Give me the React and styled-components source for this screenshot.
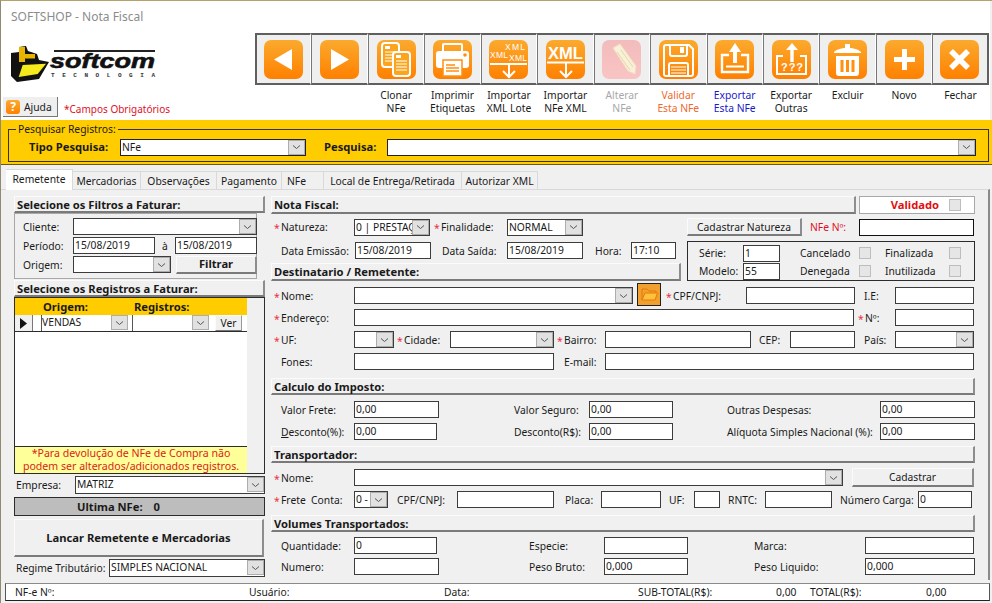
import styled, { createGlobalStyle } from "styled-components";

const GlobalStyle = createGlobalStyle`
  html, body {
    margin: 0;
    padding: 0;
    background: #f0f0f0;
  }
  * {
    box-sizing: border-box;
  }
`;

const Window = styled.div`
  width: 992px;
  height: 603px;
  overflow: hidden;
  display: flex;
  flex-direction: column;
  background: #f0f0f0;
  border-top: 1px solid #b3a36a;
  border-left: 1px solid #8f8a70;
  font-family: "Noto Sans", "Open Sans", sans-serif;
  font-size: 10.3px;
  line-height: 14px;
  color: #1a1a1a;
`;

/* header */
const Header = styled.header`
  height: 119px;
  flex-shrink: 0;
  background: #fff;
  margin-right: 2px;
  display: flex;
  flex-direction: column;
`;
const Title = styled.div`
  height: 32px;
  padding: 9px 0 0 10px;
  font-size: 12px;
  color: #8c8c8c;
`;
const HeaderBody = styled.div`
  display: flex;
  flex: 1;
`;
const Brand = styled.div`
  width: 254px;
  display: flex;
  flex-direction: column;
`;
const LogoWrap = styled.div`
  height: 64px;
  padding: 12px 0 0 9px;
`;
const BrandFoot = styled.div`
  display: flex;
  align-items: center;
  padding-left: 2px;
  gap: 6px;
`;
const HelpButton = styled.div`
  width: 55px;
  height: 20px;
  display: flex;
  align-items: center;
  gap: 4px;
  padding-left: 3px;
  background: #efefef;
  border-right: 1px solid #777;
  border-bottom: 1px solid #777;
`;
const HelpTile = styled.span`
  width: 14px;
  height: 14px;
  border-radius: 3px;
  background: linear-gradient(#fbaa2e, #ff8200);
  color: #fff;
  font-weight: 700;
  font-size: 12px;
  line-height: 14px;
  text-align: center;
`;
const Required = styled.span`
  color: #e0102a;
  font-size: 10px;
  margin-top: 3px;
`;
const Tools = styled.div`
  display: grid;
  grid-template-columns: repeat(13, 56.45px);
  grid-template-rows: 52px auto;
`;
const ToolCell = styled.div`
  height: 52px;
  display: flex;
  align-items: center;
  justify-content: center;
  background: #efefef;
  border-top: 2px solid #5f5f5f;
  border-bottom: 2px solid #5f5f5f;
  border-left: 1px solid #777;
  border-right: 1px solid #fff;
  &:first-child {
    border-left: 2px solid #5f5f5f;
  }
  &:nth-child(13) {
    border-right: 2px solid #5f5f5f;
  }
`;
const Tile = styled.div`
  width: 39px;
  height: 39px;
  border-radius: 7px;
  background: ${(p) =>
    p.$off
      ? "linear-gradient(#f3bcbc, #f9c4c4)"
      : "linear-gradient(#fbaa2e, #ff8000)"};
  svg {
    display: block;
  }
`;
const ToolLabel = styled.div`
  padding-top: 4px;
  text-align: center;
  line-height: 13px;
  color: ${(p) => p.$color || "#1a1a1a"};
`;

/* search strip */
const SearchStrip = styled.div`
  height: 45px;
  flex-shrink: 0;
  background: #ffcc00;
  padding: 9px 3px 0 7px;
  border-bottom: 1px solid #6a5a1a;
`;
const SearchGroup = styled.fieldset`
  margin: 0;
  padding: 0 11px 0 20px;
  height: 33px;
  border: 1px solid #333;
  display: flex;
  align-items: center;
  position: relative;
`;
const SearchLegend = styled.legend`
  position: absolute;
  top: -8px;
  left: 7px;
  padding: 0 2px;
  background: #ffcc00;
`;
const SearchRow = styled.div`
  display: flex;
  align-items: center;
  margin-top: 3px;
`;
const BoldLabel = styled.span`
  width: ${(p) => p.$w}px;
  margin-left: ${(p) => p.$ml || 0}px;
  font-size: 11.2px;
  font-weight: 700;
  white-space: nowrap;
`;

/* tabs */
const TabStrip = styled.div`
  display: flex;
  flex-shrink: 0;
  height: 24px;
  padding: 4px 0 0 5px;
`;
const Tab = styled.div`
  width: ${(p) => p.$w}px;
  height: ${(p) => (p.$active ? 21 : 18)}px;
  margin-top: ${(p) => (p.$active ? 0 : 2)}px;
  padding-top: 2px;
  padding-right: ${(p) => p.$pr || 0}px;
  text-align: center;
  white-space: nowrap;
  position: relative;
  z-index: ${(p) => (p.$active ? 1 : 0)};
  background: ${(p) => (p.$active ? "#fff" : "#f0f0f0")};
  border: 1px solid #d9d9d9;
  border-bottom: 0;
  border-left: 0;
`;
const Panel = styled.div`
  flex: 1;
  min-height: 0;
  display: flex;
  gap: 6px;
  margin-right: 2px;
  padding: 6px 0 0 13px;
  border-top: 1px solid #d9d9d9;
  border-right: 2px solid #8a8a8a;
`;
const LeftCol = styled.div`
  width: 251px;
  display: flex;
  flex-direction: column;
`;
const RightCol = styled.div`
  width: 704px;
  display: flex;
  flex-direction: column;
`;

/* shared parts */
const SectionBar = styled.div`
  width: ${(p) => (p.$w ? `${p.$w}px` : "100%")};
  height: ${(p) => p.$h || 18}px;
  margin-top: ${(p) => p.$mt || 0}px;
  flex-shrink: 0;
  padding: 1px 0 0 2px;
  background: #f0f0f0;
  font-size: 11.2px;
  font-weight: 700;
  border-top: 1px solid #fbfbfb;
  border-left: 1px solid #fbfbfb;
  border-right: 2px solid #8d8d8d;
  border-bottom: 2px solid #7a7a7a;
  white-space: nowrap;
`;
const Row = styled.div`
  display: flex;
  align-items: center;
  height: ${(p) => p.$h || 17}px;
  margin-top: ${(p) => p.$mt || 0}px;
  padding-left: ${(p) => p.$pl ?? 3}px;
  flex-shrink: 0;
`;
const Label = styled.span`
  width: ${(p) => p.$w}px;
  margin-left: ${(p) => p.$ml || 0}px;
  padding-left: ${(p) => (p.$plain ? 0 : 7)}px;
  flex-shrink: 0;
  white-space: pre;
  position: relative;
  color: ${(p) => p.$color || "inherit"};
`;
const Star = styled.span`
  position: absolute;
  left: 0;
  top: 1px;
  color: #e8304a;
`;
const Field = styled.div`
  width: ${(p) => p.$w}px;
  height: ${(p) => p.$h || 17}px;
  margin-left: ${(p) => p.$ml || 0}px;
  flex-shrink: 0;
  padding-left: 1px;
  background: #fff;
  border: 1px solid ${(p) => p.$border || "#3c3c3c"};
  white-space: nowrap;
  overflow: hidden;
  line-height: 14px;
`;
const ComboBox = styled(Field)`
  display: flex;
`;
const ComboText = styled.span`
  flex: 1;
  overflow: hidden;
`;
const ComboArrow = styled.span`
  width: 17px;
  height: 15px;
  flex-shrink: 0;
  background: #e1e1e1;
  border: 1px solid #adadad;
  display: flex;
  align-items: center;
  justify-content: center;
`;
const Button = styled.div`
  width: ${(p) => p.$w}px;
  height: ${(p) => p.$h || 18}px;
  margin-left: ${(p) => p.$ml || 0}px;
  margin-top: ${(p) => p.$mt || 0}px;
  flex-shrink: 0;
  display: flex;
  align-items: center;
  justify-content: center;
  font-size: ${(p) => (p.$bold ? "11.2px" : "inherit")};
  font-weight: ${(p) => (p.$bold ? 700 : 400)};
  background: #f0f0f0;
  border-top: 1px solid #fbfbfb;
  border-left: 1px solid #fbfbfb;
  border-right: 2px solid #8d8d8d;
  border-bottom: 2px solid #7a7a7a;
`;
const CheckBox = styled.span`
  width: 12px;
  height: 12px;
  flex-shrink: 0;
  background: #e6e6e6;
  border: 1px solid #bdbdbd;
`;

/* left column */
const FilterBox = styled.div`
  height: 66px;
  flex-shrink: 0;
  margin-right: 8px;
  padding: 4px 0 0 8px;
  border: 1px solid #a8a8a8;
  display: flex;
  flex-direction: column;
  gap: 2px;
`;
const Grid = styled.div`
  height: 177px;
  flex-shrink: 0;
  display: flex;
  flex-direction: column;
  background: #f0f0f0;
  border: 1px solid #2c2c2c;
`;
const GridHead = styled.div`
  width: 232px;
  height: 17px;
  background: #ffcc00;
  display: flex;
  align-items: center;
  padding-left: 28px;
`;
const GridRow = styled.div`
  width: 232px;
  height: 17px;
  display: flex;
  background: #fff;
  border-bottom: 1px solid #2c2c2c;
`;
const RowMark = styled.div`
  width: 18px;
  background: #f0f0f0;
  border-right: 1px solid #777;
  display: flex;
  align-items: center;
  justify-content: center;
`;
const GridCell = styled.div`
  width: ${(p) => p.$w}px;
  display: flex;
  padding-left: ${(p) => p.$pl || 0}px;
  margin-left: ${(p) => p.$ml || 0}px;
  border-left: 1px solid #555;
  overflow: hidden;
`;
const SmallButton = styled(Button)`
  border-right: 1px solid #999;
  border-bottom: 1px solid #777;
`;
const GridBody = styled.div`
  width: 232px;
  flex: 1;
  background: #fff;
`;
const GridNote = styled.div`
  width: 232px;
  height: 27px;
  background: #ffff99;
  border-top: 1px solid #2c2c2c;
  color: #d8241a;
  font-size: 10.6px;
  text-align: center;
  line-height: 13px;
`;
const LastInvoice = styled.div`
  height: 19px;
  margin-top: 3px;
  flex-shrink: 0;
  display: flex;
  align-items: center;
  gap: 11px;
  padding-left: 62px;
  font-size: 11.2px;
  font-weight: 700;
  background: #bdbdbd;
  border: 1px solid #2c2c2c;
`;

/* right column */
const ValidBox = styled.div`
  width: 116px;
  height: 18px;
  margin-left: 3px;
  display: flex;
  align-items: center;
  justify-content: flex-end;
  padding-right: 13px;
  gap: 10px;
  background: #fff;
  border: 1px solid #a8a8a8;
  color: #e01010;
  font-size: 11.2px;
  font-weight: 700;
`;
const Split = styled.div`
  display: flex;
  height: 40px;
  margin-top: 5px;
  flex-shrink: 0;
`;
const SplitLeft = styled.div`
  width: 410px;
  display: flex;
  flex-direction: column;
`;
const StatusBox = styled.div`
  width: 288px;
  margin-left: 6px;
  padding: 2px 0 0 11px;
  border: 1px solid #2c2c2c;
  display: flex;
  flex-direction: column;
`;
const FolderButton = styled.div`
  width: 24px;
  height: 23px;
  margin-left: 4px;
  margin-top: -2px;
  flex-shrink: 0;
  display: flex;
  align-items: center;
  justify-content: center;
  background: #f0a030;
  border: 1px solid #222;
`;

/* status bar */
const StatusBar = styled.footer`
  height: 18px;
  margin: 3px 2px 2px 4px;
  flex-shrink: 0;
  display: flex;
  align-items: center;
  background: #fff;
  border-top: 1px solid #8a8a8a;
  border-bottom: 1px solid #222;
  border-left: 1px solid #555;
  border-right: 1px solid #555;
`;
const StatusText = styled.span`
  width: ${(p) => p.$w}px;
  flex-shrink: 0;
  padding-left: ${(p) => p.$pl || 0}px;
`;

function Chevron() {
  return (
    <svg width="9" height="6" viewBox="0 0 9 6">
      <path d="M1 1.5 L4.5 4.5 L8 1.5" fill="none" stroke="#555" strokeWidth="1" />
    </svg>
  );
}

function Combo({ w, h, ml, text, border }) {
  return (
    <ComboBox $w={w} $h={h} $ml={ml} $border={border}>
      <ComboText>{text}</ComboText>
      <ComboArrow>
        <Chevron />
      </ComboArrow>
    </ComboBox>
  );
}

function Logo() {
  return (
    <svg width="150" height="40" viewBox="0 0 150 40">
      <path d="M1 8 L9 7 L9 2 L16 1 L18 6 L27 9 L29 15 L39 17 L29 34 L7 37 L1 31 Z" fill="#111" />
      <path d="M9 2 H15 V9 H25 V13.5 H15 V17 H9 Z" fill="#e8b400" />
      <path d="M12.7 20 L36 18.7 L27.7 29 L8.7 32 Z" fill="#f7ea1c" />
      <rect x="44" y="5" width="101" height="2" fill="#222" />
      <text x="40" y="23" fontFamily="Liberation Sans" fontWeight="700" fontStyle="italic" fontSize="20" textLength="105" lengthAdjust="spacingAndGlyphs" fill="#111" stroke="#111" strokeWidth="0.6">softcom</text>
      <text x="41" y="32" fontFamily="Liberation Mono" fontWeight="700" fontSize="6" textLength="104" fill="#333">TECNOLOGIA</text>
    </svg>
  );
}

const W = { fill: "none", stroke: "#fff", strokeWidth: 2 };
const xmlText = { fill: "#fff", fontFamily: "Liberation Sans" };

function Doc({ x, y }) {
  return (
    <g>
      <rect x={x} y={y} width="17" height="24" rx="3" fill="#fca41e" stroke="#fff" strokeWidth="2" />
      <path d={`M${x + 3} ${y + 9} h11 M${x + 3} ${y + 12} h11 M${x + 3} ${y + 15} h11 M${x + 3} ${y + 18} h11`} stroke="#fff" strokeWidth="1.2" />
      <rect x={x + 3} y={y + 3} width="5" height="3" fill="#fff" />
    </g>
  );
}

function DownArrow({ y }) {
  return <path d={`M1 ${y} H38 M20 ${y + 1} V37 M14 31 L20 37 L26 31`} {...W} />;
}

const icons = {
  back: <polygon points="10,19.5 28,9 28,30" fill="#fff" />,
  next: <polygon points="11,9 29,19.5 11,30" fill="#fff" />,
  clone: (
    <g>
      <Doc x={5} y={3} />
      <Doc x={16} y={12} />
    </g>
  ),
  print: (
    <g>
      <path d="M10 11 V5 Q10 4 11 4 H28 Q29 4 29 5 V11" {...W} />
      <rect x="3" y="11" width="33" height="17" rx="3" fill="#fff" />
      <rect x="10" y="20" width="19" height="16" fill="#fff" stroke="#ff9010" strokeWidth="1.5" />
      <path d="M13 25 h9 M13 28 h13 M13 31 h13" stroke="#ff9010" strokeWidth="1.5" />
      <circle cx="32" cy="15" r="1.8" fill="#ff9010" />
    </g>
  ),
  xmlLote: (
    <g>
      <text x="16" y="10" fontSize="8.5" textLength="20" {...xmlText}>XML</text>
      <text x="1" y="18" fontSize="8.5" textLength="18" {...xmlText}>XML</text>
      <text x="20" y="21" fontSize="8.5" textLength="18" {...xmlText}>XML</text>
      <DownArrow y={24} />
    </g>
  ),
  xml: (
    <g>
      <text x="2" y="19" fontSize="16" fontWeight="700" textLength="35" lengthAdjust="spacingAndGlyphs" {...xmlText}>XML</text>
      <DownArrow y={22.5} />
    </g>
  ),
  pencil: (
    <g>
      <path d="M11 8 L18 4 L34 26 L33 34 L26 31 Z" fill="#f8f0d8" stroke="#f0dfc0" />
      <path d="M15 12 L28 30 M19 10 L31 27" stroke="#e8d8a8" strokeWidth="1" />
    </g>
  ),
  save: (
    <g>
      <path d="M7 5 H30 L34 9 V34 Q34 36 32 36 H7 Q5 36 5 34 V7 Q5 5 7 5 Z" {...W} />
      <path d="M11 5 V14 Q11 16 13 16 H26 Q28 16 28 14 V5" {...W} />
      <rect x="21" y="7" width="4" height="6" fill="#fff" />
      <path d="M10 36 V25 Q10 23 12 23 H27 Q29 23 29 25 V36" {...W} />
      <path d="M12 27 H27 M12 30 H27 M12 33 H27" stroke="#fff" strokeWidth="1.2" />
    </g>
  ),
  export: (
    <g>
      <path d="M14 15 H7 V32 H33 V15 H26" {...W} strokeWidth="2.4" />
      <path d="M11 26.5 H29" stroke="#fff" strokeWidth="2" />
      <path d="M20 23 V10" stroke="#fff" strokeWidth="4" />
      <polygon points="14,12 20,3 26,12" fill="#fff" />
    </g>
  ),
  exportOther: (
    <g>
      <path d="M11 16 H5 V34 H34 V16 H28" {...W} />
      <path d="M20 22 V9" stroke="#fff" strokeWidth="3.4" />
      <polygon points="14,10 20,3 26,10" fill="#fff" />
      <text x="9" y="31" fontSize="11" fontWeight="700" textLength="22" {...xmlText}>???</text>
    </g>
  ),
  trash: (
    <g>
      <path d="M6 12 C9 9 14 8 17 8 L17 4 H22 V8 C25 8 30 9 33 12 V13 H6 Z" fill="#fff" />
      <path d="M8 16 H31 V33 Q31 36 28 36 H11 Q8 36 8 33 Z" fill="#fff" />
      <path d="M14 20 V32 M19.5 20 V32 M25 20 V32" stroke="#ff9010" strokeWidth="3" />
    </g>
  ),
  plus: <path d="M19.5 9 V30 M9 19.5 H30" stroke="#fff" strokeWidth="5" />,
  close: <path d="M11 11 L28 28 M28 11 L11 28" stroke="#fff" strokeWidth="5.5" />,
};

const tools = [
  { icon: "back", lines: [] },
  { icon: "next", lines: [] },
  { icon: "clone", lines: ["Clonar", "NFe"] },
  { icon: "print", lines: ["Imprimir", "Etiquetas"] },
  { icon: "xmlLote", lines: ["Importar", "XML Lote"] },
  { icon: "xml", lines: ["Importar", "NFe XML"] },
  { icon: "pencil", lines: ["Alterar", "NFe"], color: "#a8a8a8", off: true },
  { icon: "save", lines: ["Validar", "Esta NFe"], color: "#ee6a2c" },
  { icon: "export", lines: ["Exportar", "Esta NFe"], color: "#1a1ac8" },
  { icon: "exportOther", lines: ["Exportar", "Outras"] },
  { icon: "trash", lines: ["Excluir"] },
  { icon: "plus", lines: ["Novo"] },
  { icon: "close", lines: ["Fechar"] },
];

const tabs = [
  { name: "Remetente", w: 67 },
  { name: "Mercadorias", w: 68 },
  { name: "Observações", w: 76 },
  { name: "Pagamento", w: 65 },
  { name: "NFe", w: 42, pr: 12 },
  { name: "Local de Entrega/Retirada", w: 138 },
  { name: "Autorizar XML", w: 76 },
];

export default function App() {
  return (
    <Window>
      <GlobalStyle />
      <Header>
        <Title>SOFTSHOP - Nota Fiscal</Title>
        <HeaderBody>
          <Brand>
            <LogoWrap>
              <Logo />
            </LogoWrap>
            <BrandFoot>
              <HelpButton>
                <HelpTile>?</HelpTile>
                Ajuda
              </HelpButton>
              <Required>*Campos Obrigatórios</Required>
            </BrandFoot>
          </Brand>
          <Tools>
            {tools.map((t) => (
              <ToolCell key={t.icon}>
                <Tile $off={t.off}>
                  <svg width="39" height="39" viewBox="0 0 39 39">
                    {icons[t.icon]}
                  </svg>
                </Tile>
              </ToolCell>
            ))}
            {tools.map((t) => (
              <ToolLabel key={t.icon} $color={t.color}>
                {t.lines[0]}
                <br />
                {t.lines[1]}
              </ToolLabel>
            ))}
          </Tools>
        </HeaderBody>
      </Header>

      <SearchStrip>
        <SearchGroup>
          <SearchLegend>Pesquisar Registros:</SearchLegend>
          <SearchRow>
            <BoldLabel $w={91}>Tipo Pesquisa:</BoldLabel>
            <Combo w={186} text="NFe" border="#222" />
            <BoldLabel $w={63} $ml={18}>
              Pesquisa:
            </BoldLabel>
            <Combo w={589} border="#222" />
          </SearchRow>
        </SearchGroup>
      </SearchStrip>

      <TabStrip>
        {tabs.map((t, i) => (
          <Tab key={t.name} $w={t.w} $pr={t.pr} $active={i === 0}>
            {t.name}
          </Tab>
        ))}
      </TabStrip>

      <Panel>
        <LeftCol>
          <SectionBar $h={17}>Selecione os Filtros a Faturar:</SectionBar>
          <FilterBox>
            <Row $pl={0}>
              <Label $w={50} $plain>Cliente:</Label>
              <Combo w={184} />
            </Row>
            <Row $pl={0}>
              <Label $w={50} $plain>Período:</Label>
              <Field $w={82}>15/08/2019</Field>
              <Label $w={20} $plain $ml={7}>à</Label>
              <Field $w={82} $ml={-7}>15/08/2019</Field>
            </Row>
            <Row $pl={0}>
              <Label $w={50} $plain>Origem:</Label>
              <Combo w={98} />
              <Button $w={81} $ml={5} $bold>Filtrar</Button>
            </Row>
          </FilterBox>
          <SectionBar $h={17} $mt={1}>Selecione os Registros a Faturar:</SectionBar>
          <Grid>
            <GridHead>
              <BoldLabel $w={91}>Origem:</BoldLabel>
              <BoldLabel $w={90}>Registros:</BoldLabel>
            </GridHead>
            <GridRow>
              <RowMark>
                <svg width="7" height="11" viewBox="0 0 7 11">
                  <polygon points="0,0 7,5.5 0,11" fill="#111" />
                </svg>
              </RowMark>
              <GridCell $w={87} $ml={8}>
                <ComboText>VENDAS</ComboText>
                <ComboArrow>
                  <Chevron />
                </ComboArrow>
              </GridCell>
              <GridCell $w={77} $ml={4}>
                <ComboText />
                <ComboArrow>
                  <Chevron />
                </ComboArrow>
              </GridCell>
              <SmallButton $w={27} $h={16} $ml={6}>Ver</SmallButton>
            </GridRow>
            <GridBody />
            <GridNote>
              *Para devolução de NFe de Compra não
              <br />
              podem ser alterados/adicionados registros.
            </GridNote>
          </Grid>
          <Row $pl={2} $h={18} $mt={2}>
            <Label $w={59} $plain>Empresa:</Label>
            <Combo w={190} h={18} text="MATRIZ" />
          </Row>
          <LastInvoice>
            <span>Ultima NFe:</span>
            <span>0</span>
          </LastInvoice>
          <Button $w={250} $h={38} $mt={3} $bold>
            Lancar Remetente e Mercadorias
          </Button>
          <Row $pl={2} $h={18} $mt={2}>
            <Label $w={93} $plain>Regime Tributário:</Label>
            <Combo w={156} h={18} text="SIMPLES NACIONAL" />
          </Row>
        </LeftCol>

        <RightCol>
          <Row $pl={0} $h={18}>
            <SectionBar $w={585}>Nota Fiscal:</SectionBar>
            <ValidBox>
              Validado
              <CheckBox />
            </ValidBox>
          </Row>
          <Row $mt={4} $h={18}>
            <Label $w={80}><Star>*</Star>Natureza:</Label>
            <Combo w={76} text="0 | PRESTAÇÃO" />
            <Label $w={73} $ml={4}><Star>*</Star>Finalidade:</Label>
            <Combo w={76} text="NORMAL" />
            <Button $w={115} $ml={104}>Cadastrar Natureza</Button>
            <Label $w={49} $ml={8} $plain $color="#e0102a">NFe Nº:</Label>
            <Field $w={115} $border="#111">{""}</Field>
          </Row>
          <Split>
            <SplitLeft>
              <Row $mt={1}>
                <Label $w={81}>Data Emissão:</Label>
                <Field $w={76}>15/08/2019</Field>
                <Label $w={65} $ml={11} $plain>Data Saída:</Label>
                <Field $w={76}>15/08/2019</Field>
                <Label $w={36} $ml={12} $plain>Hora:</Label>
                <Field $w={45}>17:10</Field>
              </Row>
              <SectionBar $mt={4}>Destinatario / Remetente:</SectionBar>
            </SplitLeft>
            <StatusBox>
              <Row $pl={0} $h={18}>
                <Label $w={44} $plain>Série:</Label>
                <Field $w={37}>1</Field>
                <Label $w={59} $ml={20} $plain>Cancelado</Label>
                <CheckBox />
                <Label $w={64} $ml={14} $plain>Finalizada</Label>
                <CheckBox />
              </Row>
              <Row $pl={0} $h={18}>
                <Label $w={44} $plain>Modelo:</Label>
                <Field $w={37}>55</Field>
                <Label $w={59} $ml={20} $plain>Denegada</Label>
                <CheckBox />
                <Label $w={64} $ml={14} $plain>Inutilizada</Label>
                <CheckBox />
              </Row>
            </StatusBox>
          </Split>
          <Row $mt={3} $h={23}>
            <Label $w={80}><Star>*</Star>Nome:</Label>
            <Combo w={279} />
            <FolderButton>
              <svg width="17" height="15" viewBox="0 0 17 15">
                <path d="M1 13 V2 H6 L8 4 H15 V6" fill="none" stroke="#e87a00" />
                <path d="M1 13 L4 6 H16.5 L14 13 Z" fill="#ffc040" stroke="#e87a00" />
              </svg>
            </FolderButton>
            <Label $w={80} $ml={5}><Star>*</Star>CPF/CNPJ:</Label>
            <Field $w={109}>{""}</Field>
            <Label $w={31} $ml={9} $plain>I.E:</Label>
            <Field $w={79}>{""}</Field>
          </Row>
          <Row $mt={2}>
            <Label $w={80}><Star>*</Star>Endereço:</Label>
            <Field $w={500}>{""}</Field>
            <Label $w={37} $ml={4}><Star>*</Star>Nº:</Label>
            <Field $w={79}>{""}</Field>
          </Row>
          <Row $mt={5}>
            <Label $w={80}><Star>*</Star>UF:</Label>
            <Combo w={40} />
            <Label $w={53} $ml={3}><Star>*</Star>Cidade:</Label>
            <Combo w={104} />
            <Label $w={48} $ml={3}><Star>*</Star>Bairro:</Label>
            <Field $w={146}>{""}</Field>
            <Label $w={31} $ml={8} $plain>CEP:</Label>
            <Field $w={65}>{""}</Field>
            <Label $w={31} $ml={9} $plain>País:</Label>
            <Combo w={79} />
          </Row>
          <Row $mt={5}>
            <Label $w={80}>Fones:</Label>
            <Field $w={200}>{""}</Field>
            <Label $w={41} $ml={10} $plain>E-mail:</Label>
            <Field $w={369}>{""}</Field>
          </Row>

          <SectionBar $h={17} $mt={8}>Calculo do Imposto:</SectionBar>
          <Row $mt={6}>
            <Label $w={80}>Valor Frete:</Label>
            <Field $w={85}>0,00</Field>
            <Label $w={75} $ml={75} $plain>Valor Seguro:</Label>
            <Field $w={84}>0,00</Field>
            <Label $w={153} $ml={54} $plain>Outras Despesas:</Label>
            <Field $w={95}>0,00</Field>
          </Row>
          <Row $mt={5}>
            <Label $w={80}><u>D</u>esconto(%):</Label>
            <Field $w={83}>0,00</Field>
            <Label $w={75} $ml={77} $plain>Desconto(R$):</Label>
            <Field $w={84}>0,00</Field>
            <Label $w={153} $ml={54} $plain>Alíquota Simples Nacional (%):</Label>
            <Field $w={95}>0,00</Field>
          </Row>

          <SectionBar $h={17} $mt={6}>Transportador:</SectionBar>
          <Row $mt={6}>
            <Label $w={80}><Star>*</Star>Nome:</Label>
            <Combo w={489} />
            <Button $w={122} $h={19} $ml={9}>Cadastrar</Button>
          </Row>
          <Row $mt={5}>
            <Label $w={80}><Star>*</Star>Frete  Conta:</Label>
            <Combo w={34} text="0 - " />
            <Label $w={60} $ml={9} $plain>CPF/CNPJ:</Label>
            <Field $w={97}>{""}</Field>
            <Label $w={36} $ml={11} $plain>Placa:</Label>
            <Field $w={60}>{""}</Field>
            <Label $w={25} $ml={8} $plain>UF:</Label>
            <Field $w={26}>{""}</Field>
            <Label $w={37} $ml={8} $plain>RNTC:</Label>
            <Field $w={67}>{""}</Field>
            <Label $w={78} $ml={8} $plain>Número Carga:</Label>
            <Field $w={54}>0</Field>
          </Row>

          <SectionBar $h={17} $mt={7}>Volumes Transportados:</SectionBar>
          <Row $mt={5}>
            <Label $w={80}>Quantidade:</Label>
            <Field $w={83}>0</Field>
            <Label $w={75} $ml={92} $plain>Especie:</Label>
            <Field $w={84}>{""}</Field>
            <Label $w={111} $ml={66} $plain>Marca:</Label>
            <Field $w={109}>{""}</Field>
          </Row>
          <Row $mt={4}>
            <Label $w={80}>Numero:</Label>
            <Field $w={85}>{""}</Field>
            <Label $w={75} $ml={90} $plain>Peso Bruto:</Label>
            <Field $w={84}>0,000</Field>
            <Label $w={111} $ml={66} $plain>Peso Liquido:</Label>
            <Field $w={110}>0,000</Field>
          </Row>
        </RightCol>
      </Panel>

      <StatusBar>
        <StatusText $w={243} $pl={9}>NF-e Nº:</StatusText>
        <StatusText $w={195}>Usuário:</StatusText>
        <StatusText $w={194}>Data:</StatusText>
        <StatusText $w={138}>SUB-TOTAL(R$):</StatusText>
        <StatusText $w={34}>0,00</StatusText>
        <StatusText $w={116}>TOTAL(R$):</StatusText>
        <StatusText $w={30}>0,00</StatusText>
      </StatusBar>
    </Window>
  );
}
